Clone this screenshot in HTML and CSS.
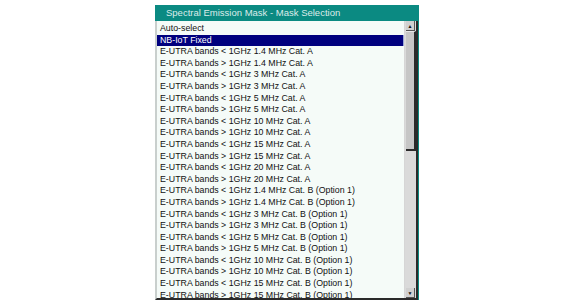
FILE: index.html
```html
<!DOCTYPE html>
<html lang="en">
<head>
    <meta charset="UTF-8">
    <title>Spectral Emission Mask - Mask Selection</title>
    <link rel="stylesheet" href="styles.css">
</head>
<body>
    <div class="dialog">
        <div class="title">Spectral Emission Mask - Mask Selection</div>
        <div class="content">
            <div class="list">
                <div class="row">Auto-select</div>
                <div class="row selected">NB-IoT Fixed</div>
                <div class="row">E-UTRA bands &lt; 1GHz 1.4 MHz Cat. A</div>
                <div class="row">E-UTRA bands &gt; 1GHz 1.4 MHz Cat. A</div>
                <div class="row">E-UTRA bands &lt; 1GHz 3 MHz Cat. A</div>
                <div class="row">E-UTRA bands &gt; 1GHz 3 MHz Cat. A</div>
                <div class="row">E-UTRA bands &lt; 1GHz 5 MHz Cat. A</div>
                <div class="row">E-UTRA bands &gt; 1GHz 5 MHz Cat. A</div>
                <div class="row">E-UTRA bands &lt; 1GHz 10 MHz Cat. A</div>
                <div class="row">E-UTRA bands &gt; 1GHz 10 MHz Cat. A</div>
                <div class="row">E-UTRA bands &lt; 1GHz 15 MHz Cat. A</div>
                <div class="row">E-UTRA bands &gt; 1GHz 15 MHz Cat. A</div>
                <div class="row">E-UTRA bands &lt; 1GHz 20 MHz Cat. A</div>
                <div class="row">E-UTRA bands &gt; 1GHz 20 MHz Cat. A</div>
                <div class="row">E-UTRA bands &lt; 1GHz 1.4 MHz Cat. B (Option 1)</div>
                <div class="row">E-UTRA bands &gt; 1GHz 1.4 MHz Cat. B (Option 1)</div>
                <div class="row">E-UTRA bands &lt; 1GHz 3 MHz Cat. B (Option 1)</div>
                <div class="row">E-UTRA bands &gt; 1GHz 3 MHz Cat. B (Option 1)</div>
                <div class="row">E-UTRA bands &lt; 1GHz 5 MHz Cat. B (Option 1)</div>
                <div class="row">E-UTRA bands &gt; 1GHz 5 MHz Cat. B (Option 1)</div>
                <div class="row">E-UTRA bands &lt; 1GHz 10 MHz Cat. B (Option 1)</div>
                <div class="row">E-UTRA bands &gt; 1GHz 10 MHz Cat. B (Option 1)</div>
                <div class="row">E-UTRA bands &lt; 1GHz 15 MHz Cat. B (Option 1)</div>
                <div class="row">E-UTRA bands &gt; 1GHz 15 MHz Cat. B (Option 1)</div>
            </div>
            <div class="scrollbar">
                <div class="arrow">&#9650;</div>
                <div class="thumb"></div>
                <div class="track"></div>
                <div class="arrow">&#9660;</div>
            </div>
        </div>
    </div>
</body>
</html>
```

FILE: styles.css
```css
:root {
    --teal: #0b8a82;
    --list-bg: #f5fbf8;
    --navy: #00007e;
    --dark: #2a2a2a;
}

body {
    margin: 0;
    background: #ffffff;
    font-family: 'Liberation Sans', Arial, sans-serif;
}

.dialog {
    margin: 5px 0 0 155px;
    width: 264px;
    height: 295px;
    display: flex;
    flex-direction: column;
    background: var(--teal);
}

.title {
    height: 16px;
    line-height: 16px;
    padding-left: 11px;
    font-size: 9.5px;
    color: #dcecea;
    white-space: nowrap;
}

.content {
    flex: 1;
    display: flex;
    min-height: 0;
    border-left: 2px solid #c9cfcd;
    border-right: 2px solid var(--dark);
    border-bottom: 2px solid var(--dark);
    margin-right: 1px;
    background: #d6d6d6;
}

.list {
    flex: 1;
    background: var(--list-bg);
    overflow: hidden;
    padding-top: 2px;
    margin-right: 1px;
}

.row {
    height: 11.6px;
    line-height: 11.6px;
    padding-left: 3px;
    font-size: 8.8px;
    color: #111;
    white-space: nowrap;
}

.row.selected {
    background: var(--navy);
    color: #ffffff;
    margin-right: 1px;
    box-shadow: 1px 0 0 #9aa6d8;
}

.scrollbar {
    width: 11px;
    display: flex;
    flex-direction: column;
    background: #dadada;
}

.arrow {
    height: 10px;
    width: 9px;
    margin-left: 1px;
    font-size: 5px;
    line-height: 10px;
    text-align: center;
    color: #111;
    background: #d0d0d0;
    border-right: 1px solid #555;
    border-bottom: 1px solid #555;
    box-sizing: border-box;
}

.thumb {
    height: 120px;
    margin-left: 1px;
    background: #c6c6c6;
    border-right: 2px solid var(--dark);
    border-bottom: 2px solid var(--dark);
    border-top: 1px solid #e8e8e8;
    box-sizing: border-box;
}

.track {
    flex: 1;
}
```
